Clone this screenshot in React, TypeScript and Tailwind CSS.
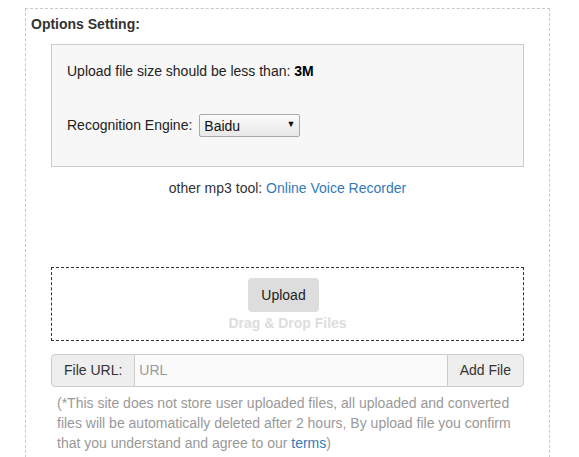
import { useState } from "react"

export default function App() {
  const [engine, setEngine] = useState("Baidu")

  return (
    <div className="w-[579px] h-[457px] overflow-hidden bg-white font-['Liberation_Sans',Arial,sans-serif] text-[14px] text-[#333]">
      <div className="ml-[25px] mt-[8px] w-[525px] h-[480px] border border-dashed border-[#c8c8c8] px-[25px]">
        <h3 className="-ml-[20px] mt-[5px] font-bold text-[14px] leading-[20px] text-[#333]">Options Setting:</h3>

        <div className="mt-[10px] h-[123px] border border-[#ccc] bg-[#f7f7f7] px-[15px] pt-[16px]">
          <p className="leading-[20px] text-[#222]">
            Upload file size should be less than: <b className="text-black">3M</b>
          </p>
          <div className="mt-[33px] flex items-center text-[#222]">
            <span>Recognition Engine:</span>
            <div className="relative ml-[7px]">
              <select
                value={engine}
                onChange={(e) => setEngine(e.target.value)}
                className="appearance-none w-[101px] h-[23px] rounded-[2px] border border-[#a9a9a9] bg-gradient-to-b from-[#fbfbfb] to-[#e8e8e8] pl-[4px] text-[14px] leading-[20px] text-[#111]"
              >
                <option>Baidu</option>
                <option>Google</option>
              </select>
              <span className="pointer-events-none absolute right-[5px] top-[4px] text-[9px] text-[#111]">▼</span>
            </div>
          </div>
        </div>

        <p className="mt-[11px] text-center leading-[20px] text-[#333]">
          other mp3 tool: <a href="#" className="text-[#337ab7]">Online Voice Recorder</a>
        </p>

        <div className="mt-[69px] h-[74px] border border-dashed border-[#333] flex flex-col items-center pt-[10px]">
          <button className="mr-[8px] h-[34px] w-[71px] rounded-[4px] bg-[#ddd] text-[14px] text-[#222]">Upload</button>
          <div className="mt-[1px] font-bold text-[14px] leading-[20px] text-[#ddd]">Drag &amp; Drop Files</div>
        </div>

        <div className="mt-[13px] flex h-[33px]">
          <span className="flex items-center rounded-l-[4px] border border-[#ccc] bg-[#eee] px-[12px] text-[#333]">File URL:</span>
          <input
            placeholder="URL"
            className="flex-1 min-w-0 border-y border-[#ccc] bg-[#fafafa] px-[4px] text-[14px] text-[#333] placeholder:text-[#999] outline-none"
          />
          <button className="rounded-r-[4px] border border-[#ccc] bg-[#eee] px-[12px] text-[14px] text-[#333]">Add File</button>
        </div>

        <p className="mt-[6px] px-[6px] leading-[20px] text-[#999]">
          (*This site does not store user uploaded files, all uploaded and converted files will be automatically deleted after 2 hours, By upload file you confirm that you understand and agree to our <a href="#" className="text-[#337ab7]">terms</a>)
        </p>
      </div>
    </div>
  )
}
